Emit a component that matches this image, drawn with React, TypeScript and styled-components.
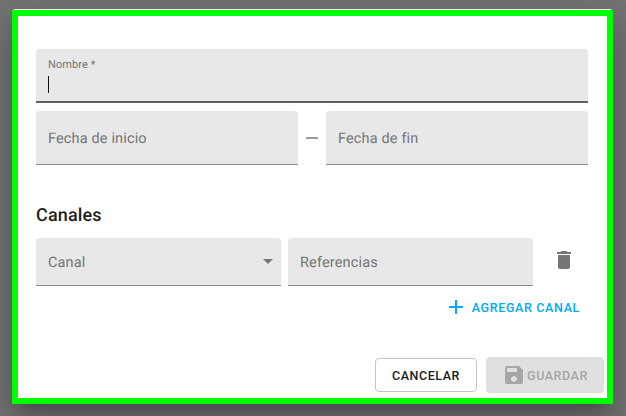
import React from "react";
import { createGlobalStyle, styled } from "styled-components";

const GlobalStyle = createGlobalStyle`
  html, body {
    margin: 0;
    padding: 0;
    width: 626px;
    height: 416px;
    overflow: hidden;
    background: #757575;
    font-family: Roboto, "Liberation Sans", sans-serif;
    text-rendering: geometricPrecision;
  }
  * {
    box-sizing: border-box;
  }
`;

const Backdrop = styled.div`
  width: 626px;
  height: 416px;
  padding: 9px 13px 12px 12px;
  background: #757575;
`;

const Dialog = styled.div`
  height: 395px;
  padding-top: 1px;
  background: #fff;
  border-radius: 4px 4px 0 0;
  box-shadow:
    0 11px 15px -7px rgba(0, 0, 0, 0.2),
    0 24px 38px 3px rgba(0, 0, 0, 0.14),
    0 9px 46px 8px rgba(0, 0, 0, 0.12);
`;

const DialogFrame = styled.div`
  height: 394px;
  border: 6px solid #00ff00;
  background: #fff;
  padding: 33px 19px 0 18px;
  display: flex;
  flex-direction: column;
`;

const FieldBox = styled.div<{ $height: number; $focused?: boolean; $width?: number }>`
  position: relative;
  height: ${(p) => p.$height}px;
  ${(p) => (p.$width ? `width: ${p.$width}px; flex: none;` : "flex: 1;")}
  padding: 0 12px;
  display: flex;
  align-items: center;
  justify-content: space-between;
  background: #e8e8e8;
  border-radius: 4px 4px 0 0;
  border-bottom: ${(p) => (p.$focused ? "2px solid #616161" : "1px solid #8c8c8c")};
`;

const FieldPlaceholder = styled.span`
  padding-top: 2px;
  font-size: 14.5px;
  line-height: 20px;
  letter-spacing: 0.15px;
  color: #757575;
`;

const FocusedField = styled(FieldBox)`
  flex: none;
  flex-direction: column;
  align-items: flex-start;
  justify-content: flex-start;
  padding-top: 9px;
`;

const SmallLabel = styled.label`
  font-size: 11px;
  line-height: 13px;
  letter-spacing: 0.1px;
  color: #757575;
`;

const Caret = styled.span`
  width: 1px;
  height: 17px;
  margin-top: 5px;
  background: #111;
`;

const DateRow = styled.div`
  display: flex;
  align-items: center;
  margin-top: 8px;
`;

const RangeDash = styled.span`
  width: 12px;
  height: 2px;
  margin: 0 8px;
  flex: none;
  background: #9a9a9a;
`;

const SectionTitle = styled.h2`
  margin: 41px 0 0;
  font-size: 18px;
  line-height: 20px;
  font-weight: 500;
  letter-spacing: 0.15px;
  color: #212121;
`;

const ChannelRow = styled.div`
  display: flex;
  align-items: center;
  gap: 7px;
  margin-top: 12px;
`;

const SelectArrow = styled.span`
  width: 0;
  height: 0;
  border-left: 5px solid transparent;
  border-right: 5px solid transparent;
  border-top: 5px solid #757575;
  margin-right: -4px;
`;

const IconButton = styled.button`
  width: 48px;
  height: 48px;
  padding: 0;
  border: none;
  background: none;
  display: flex;
  align-items: center;
  justify-content: center;
  margin-top: -4px;
`;

const AddRow = styled.div`
  display: flex;
  justify-content: flex-end;
  margin-top: 8px;
`;

const AddButton = styled.button`
  display: flex;
  align-items: center;
  gap: 4px;
  height: 26px;
  padding: 0 8px 0 0;
  border: none;
  background: none;
  color: #03a9f4;
  font-family: inherit;
  font-size: 12.5px;
  font-weight: 500;
  letter-spacing: 0.65px;
`;

const Actions = styled.div`
  display: flex;
  justify-content: flex-end;
  align-items: center;
  gap: 9px;
  margin: 37px -16px 0 0;
`;

const OutlineButton = styled.button`
  width: 102px;
  height: 34px;
  border: 1px solid #c4c4c4;
  border-radius: 4px;
  background: #fff;
  color: #212121;
  font-family: inherit;
  font-size: 12.5px;
  font-weight: 500;
  letter-spacing: 0.55px;
`;

const DisabledButton = styled.button`
  width: 118px;
  height: 36px;
  padding: 0;
  border: none;
  border-radius: 4px;
  background: #e0e0e0;
  color: #a6a6a6;
  font-family: inherit;
  font-size: 12.5px;
  font-weight: 500;
  letter-spacing: 0.55px;
  display: flex;
  align-items: center;
  justify-content: center;
  gap: 1px;
`;

type IconProps = { d: string; size: number; color: string };

const Icon = ({ d, size, color }: IconProps) => (
  <svg width={size} height={size} viewBox="0 0 24 24" fill={color}>
    <path d={d} />
  </svg>
);

const DELETE_ICON =
  "M6 19c0 1.1.9 2 2 2h8c1.1 0 2-.9 2-2V7H6v12zM19 4h-3.5l-1-1h-5l-1 1H5v2h14V4z";
const ADD_ICON = "M19 13h-6v6h-2v-6H5v-2h6V5h2v6h6v2z";
const SAVE_ICON =
  "M17 3H5c-1.11 0-2 .9-2 2v14c0 1.1.89 2 2 2h14c1.1 0 2-.9 2-2V7l-4-4zm-5 16c-1.66 0-3-1.34-3-3s1.34-3 3-3 3 1.34 3 3-1.34 3-3 3zm3-10H5V5h10v4z";

export default function App() {
  return (
    <>
      <GlobalStyle />
      <Backdrop>
        <Dialog>
          <DialogFrame>
            <FocusedField $height={54} $focused>
              <SmallLabel>Nombre *</SmallLabel>
              <Caret />
            </FocusedField>
            <DateRow>
              <FieldBox $height={54}>
                <FieldPlaceholder>Fecha de inicio</FieldPlaceholder>
              </FieldBox>
              <RangeDash />
              <FieldBox $height={54}>
                <FieldPlaceholder>Fecha de fin</FieldPlaceholder>
              </FieldBox>
            </DateRow>
            <SectionTitle>Canales</SectionTitle>
            <ChannelRow>
              <FieldBox $height={48} $width={245}>
                <FieldPlaceholder>Canal</FieldPlaceholder>
                <SelectArrow />
              </FieldBox>
              <FieldBox $height={48} $width={245}>
                <FieldPlaceholder>Referencias</FieldPlaceholder>
              </FieldBox>
              <IconButton>
                <Icon d={DELETE_ICON} size={24} color="#757575" />
              </IconButton>
            </ChannelRow>
            <AddRow>
              <AddButton>
                <Icon d={ADD_ICON} size={24} color="#03a9f4" />
                AGREGAR CANAL
              </AddButton>
            </AddRow>
            <Actions>
              <OutlineButton>CANCELAR</OutlineButton>
              <DisabledButton>
                <Icon d={SAVE_ICON} size={24} color="#a6a6a6" />
                GUARDAR
              </DisabledButton>
            </Actions>
          </DialogFrame>
        </Dialog>
      </Backdrop>
    </>
  );
}
